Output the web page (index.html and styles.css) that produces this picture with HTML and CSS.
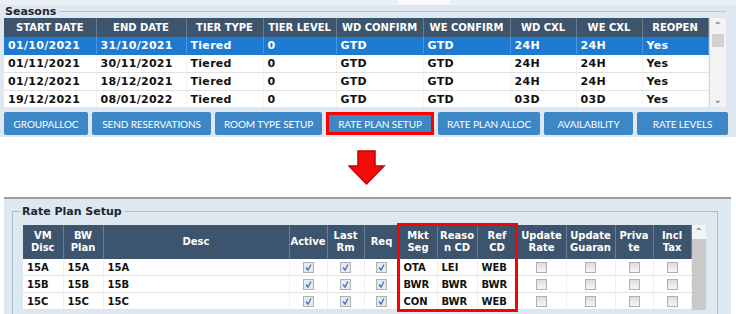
FILE: index.html
```html
<!DOCTYPE html>
<html lang="en">
<head>
  <meta charset="UTF-8" />
  <title>Seasons | Rate Plan Setup</title>
  <link rel="stylesheet" href="styles.css">
</head>
<body>
  <!-- Seasons panel -->
  <section class="seasons">
    <div class="seasons-strip"><span class="strip-tab"></span></div>
    <div class="group-title"><span>Seasons</span></div>
    <div class="grid season-grid">
      <table class="season-table">
        <colgroup>
          <col style="width:92px"><col style="width:90px"><col style="width:77px"><col style="width:73px">
          <col style="width:87px"><col style="width:87px"><col style="width:66px"><col style="width:66px"><col style="width:66px">
        </colgroup>
        <thead>
          <tr>
            <th>START DATE</th><th>END DATE</th><th>TIER TYPE</th><th>TIER LEVEL</th>
            <th>WD CONFIRM</th><th>WE CONFIRM</th><th>WD CXL</th><th>WE CXL</th><th>REOPEN</th>
          </tr>
        </thead>
        <tbody>
          <tr class="selected">
            <td>01/10/2021</td><td>31/10/2021</td><td>Tiered</td><td>0</td><td>GTD</td><td>GTD</td><td>24H</td><td>24H</td><td>Yes</td>
          </tr>
          <tr>
            <td>01/11/2021</td><td>30/11/2021</td><td>Tiered</td><td>0</td><td>GTD</td><td>GTD</td><td>24H</td><td>24H</td><td>Yes</td>
          </tr>
          <tr>
            <td>01/12/2021</td><td>18/12/2021</td><td>Tiered</td><td>0</td><td>GTD</td><td>GTD</td><td>24H</td><td>24H</td><td>Yes</td>
          </tr>
          <tr>
            <td>19/12/2021</td><td>08/01/2022</td><td>Tiered</td><td>0</td><td>GTD</td><td>GTD</td><td>03D</td><td>03D</td><td>Yes</td>
          </tr>
        </tbody>
      </table>
      <div class="vscroll">
        <span class="scroll-btn">&#8963;</span>
        <span class="scroll-thumb"></span>
        <span class="scroll-fill"></span>
        <span class="scroll-btn">&#8964;</span>
      </div>
    </div>
    <div class="actions">
      <button class="btn w-group">GROUPALLOC</button>
      <button class="btn w-send">SEND RESERVATIONS</button>
      <button class="btn w-room">ROOM TYPE SETUP</button>
      <button class="btn w-rate marked">RATE PLAN SETUP</button>
      <button class="btn w-alloc">RATE PLAN ALLOC</button>
      <button class="btn w-avail">AVAILABILITY</button>
      <button class="btn w-levels">RATE LEVELS</button>
    </div>
  </section>

  <!-- Down arrow -->
  <div class="arrow-row">
    <svg width="38" height="36" viewBox="0 0 38 36" aria-hidden="true">
      <polygon points="10,1 27,1 27,16 36,16 18.5,34 1,16 10,16" fill="#f20d0d" stroke="#c40000" stroke-width="1.5"/>
    </svg>
  </div>

  <!-- Rate plan setup panel -->
  <section class="setup">
    <fieldset class="setup-box">
      <legend>Rate Plan Setup</legend>
      <div class="plan-wrap">
        <div class="grid plan-grid">
          <table class="plan-table">
            <colgroup>
              <col style="width:40px"><col style="width:40px"><col style="width:186px"><col style="width:38px">
              <col style="width:37px"><col style="width:35px"><col style="width:38px"><col style="width:40px">
              <col style="width:40px"><col style="width:49px"><col style="width:49px"><col style="width:38px"><col style="width:38px">
            </colgroup>
            <thead>
              <tr>
                <th>VM<br>Disc</th><th>BW<br>Plan</th><th>Desc</th><th>Active</th><th>Last<br>Rm</th><th>Req</th>
                <th>Mkt<br>Seg</th><th>Reaso<br>n CD</th><th>Ref<br>CD</th><th>Update<br>Rate</th>
                <th>Update<br>Guaran</th><th>Priva<br>te</th><th>Incl<br>Tax</th>
              </tr>
            </thead>
            <tbody>
              <tr>
                <td>15A</td><td>15A</td><td>15A</td>
                <td class="c"><span class="cb on"></span></td><td class="c"><span class="cb on"></span></td><td class="c"><span class="cb on"></span></td>
                <td>OTA</td><td>LEI</td><td>WEB</td>
                <td class="c"><span class="cb"></span></td><td class="c"><span class="cb"></span></td><td class="c"><span class="cb"></span></td><td class="c"><span class="cb"></span></td>
              </tr>
              <tr>
                <td>15B</td><td>15B</td><td>15B</td>
                <td class="c"><span class="cb on"></span></td><td class="c"><span class="cb on"></span></td><td class="c"><span class="cb on"></span></td>
                <td>BWR</td><td>BWR</td><td>BWR</td>
                <td class="c"><span class="cb"></span></td><td class="c"><span class="cb"></span></td><td class="c"><span class="cb"></span></td><td class="c"><span class="cb"></span></td>
              </tr>
              <tr>
                <td>15C</td><td>15C</td><td>15C</td>
                <td class="c"><span class="cb on"></span></td><td class="c"><span class="cb on"></span></td><td class="c"><span class="cb on"></span></td>
                <td>CON</td><td>BWR</td><td>WEB</td>
                <td class="c"><span class="cb"></span></td><td class="c"><span class="cb"></span></td><td class="c"><span class="cb"></span></td><td class="c"><span class="cb"></span></td>
              </tr>
            </tbody>
          </table>
          <div class="vscroll small">
            <span class="scroll-btn">&#8963;</span>
            <span class="scroll-track"></span>
          </div>
        </div>
        <div class="highlight" aria-hidden="true"></div>
      </div>
    </fieldset>
  </section>
</body>
</html>
```

FILE: styles.css
```css
html, body {
  margin: 0;
  height: 314px;
  overflow: hidden;
  background: #fff;
  font-family: "DejaVu Sans", Verdana, sans-serif;
  color: #111;
}

/* ---------- Seasons ---------- */
.seasons {
  background: #dfe8f0;
  height: 137px;
  box-sizing: border-box;
}
.seasons-strip {
  height: 5px;
  background: #e9eff4;
  position: relative;
}
.strip-tab {
  position: absolute;
  left: 398px;
  top: 0;
  width: 52px;
  height: 5px;
  background: #f7f9fb;
}
.group-title {
  display: flex;
  align-items: center;
  height: 13px;
  padding-left: 5px;
  margin-right: 10px;
  font-size: 11px;
  font-weight: bold;
  color: #1b2733;
}
.group-title::after {
  content: "";
  flex: 1;
  height: 1px;
  margin-left: 4px;
  background: #b3c5d5;
}

.grid {
  display: flex;
  background: #fff;
  overflow: hidden;
}
.season-grid {
  height: 89px;
  margin: 0 10px 0 4px;
}

table {
  border-collapse: collapse;
  table-layout: fixed;
}
.season-table { width: 704px; }

.season-table th {
  height: 19px;
  padding: 0;
  background: #3c546c;
  color: #fff;
  font-size: 10px;
  font-weight: bold;
  text-align: center;
  white-space: nowrap;
  border-right: 1px solid #687d92;
}
.season-table td {
  height: 17px;
  padding: 0 0 0 4px;
  font-size: 11px;
  font-weight: bold;
  letter-spacing: 0.3px;
  white-space: nowrap;
  border-bottom: 1px solid #e2e2e2;
  border-right: 1px solid #f2f2f2;
}
.season-table tr.selected td {
  background: #1c7ad0;
  color: #fff;
  border-right-color: #4d95d8;
  border-bottom-color: #1c7ad0;
}

.vscroll {
  width: 18px;
  display: flex;
  flex-direction: column;
  background: #f3f3f3;
  border-left: 1px solid #d6d6d6;
  box-sizing: border-box;
}
.scroll-btn {
  height: 15px;
  line-height: 15px;
  text-align: center;
  font-size: 10px;
  color: #6a6a6a;
}
.scroll-thumb {
  height: 13px;
  margin: 1px 2px;
  background: #d2d2d2;
}
.scroll-fill { flex: 1; }

.actions {
  display: flex;
  gap: 4px;
  margin: 5px 0 0 4px;
}
.btn {
  height: 23px;
  padding: 0;
  border: none;
  border-radius: 2px;
  background: #3d87c6;
  color: #fff;
  font-family: Lato, "Open Sans", sans-serif;
  font-size: 10px;
  letter-spacing: -0.1px;
  box-sizing: border-box;
}
.btn.marked { border: 3px solid #f00; border-radius: 0; }
.w-group { width: 84px; }
.w-send { width: 119px; }
.w-room { width: 107px; }
.w-rate { width: 108px; }
.w-alloc { width: 102px; }
.w-avail { width: 89px; }
.w-levels { width: 91px; }

/* ---------- arrow ---------- */
.arrow-row {
  height: 60px;
  display: flex;
  justify-content: center;
  padding-top: 13px;
  box-sizing: border-box;
}
.arrow-row svg { margin-left: -2px; }

/* ---------- Rate plan setup ---------- */
.setup {
  margin: 0 5px 0 4px;
  height: 117px;
  overflow: hidden;
  background: #dde8f0;
  border-top: 2px solid #9c9c9c;
  padding: 6px 13px 0 8px;
  box-sizing: border-box;
}
.setup-box {
  margin: 0;
  padding: 7px 0 0 10px;
  height: 120px;
  border: 1px solid #a8bdce;
}
.setup-box legend {
  padding: 0 3px 0 2px;
  margin-left: -3px;
  font-size: 11px;
  font-weight: bold;
  line-height: 13px;
  color: #1b2733;
}
.plan-wrap { position: relative; }
.plan-grid { width: 683px; }
.plan-table { width: 668px; }

.plan-table th {
  height: 34px;
  padding: 0;
  background: #3c546d;
  color: #fff;
  font-size: 10px;
  font-weight: bold;
  line-height: 12px;
  text-align: center;
  border-right: 1px solid #687d92;
}
.plan-table td {
  height: 16px;
  padding: 0 0 0 4px;
  font-size: 10px;
  font-weight: bold;
  white-space: nowrap;
  border-bottom: 1px solid #e2e2e2;
  border-right: 1px solid #f0f0f0;
}
.plan-table td.c { padding: 0; text-align: center; }

.cb {
  display: inline-block;
  width: 9px;
  height: 9px;
  vertical-align: middle;
  border: 1px solid #b0b0b0;
  background: linear-gradient(#dcdcdc, #f6f6f6);
}
.cb.on {
  background: #e6e9ee url("data:image/svg+xml,%3Csvg xmlns='http://www.w3.org/2000/svg' width='9' height='9'%3E%3Cpolyline points='2,4.5 4,7 7,1.5' fill='none' stroke='%233d6fc2' stroke-width='1.3'/%3E%3C/svg%3E") no-repeat center;
}

.vscroll.small {
  width: 15px;
  background: #c9c9c9;
  border-left: none;
}
.vscroll.small .scroll-btn {
  height: 14px;
  line-height: 14px;
  background: #f4f4f4;
}
.scroll-track { flex: 1; }

.highlight {
  position: absolute;
  left: 374px;
  top: -2px;
  width: 121px;
  height: 89px;
  border: 3px solid #f00;
  box-sizing: border-box;
}
```
